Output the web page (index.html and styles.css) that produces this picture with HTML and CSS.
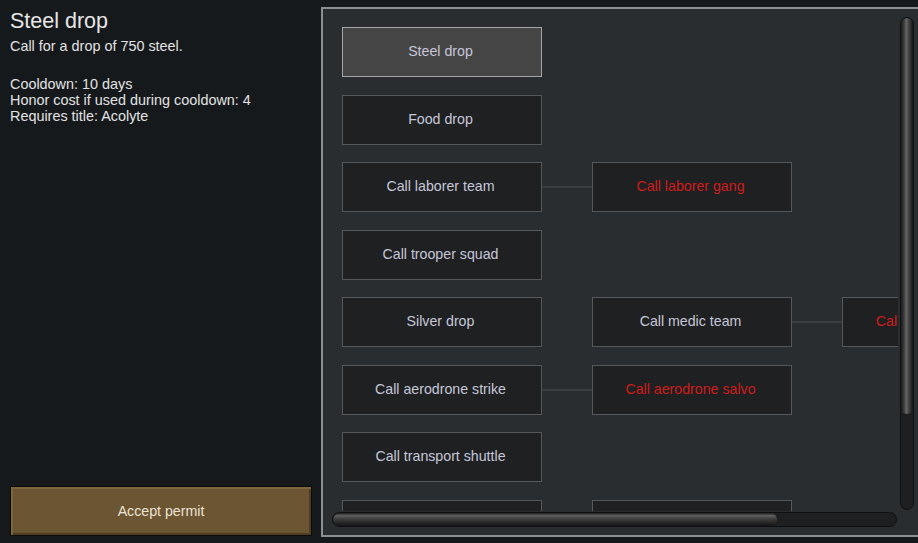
FILE: index.html
```html
<!DOCTYPE html>
<html>
<head>
<meta charset="utf-8">
<link rel="stylesheet" href="styles.css">
</head>
<body>
<div class="app">
  <aside class="info">
    <h1 class="title">Steel drop</h1>
    <p class="desc">Call for a drop of 750 steel.</p>
    <div class="stats">
      <div>Cooldown: 10 days</div>
      <div>Honor cost if used during cooldown: 4</div>
      <div>Requires title: Acolyte</div>
    </div>
    <button class="accept">Accept permit</button>
  </aside>
  <section class="panel">
    <div class="upper">
      <div class="viewport">
        <div class="tree">
          <div class="node selected">Steel drop</div><div></div><div></div><div></div><div></div>
          <div class="node">Food drop</div><div></div><div></div><div></div><div></div>
          <div class="node">Call laborer team</div><div class="link"><span></span></div><div class="node locked">Call laborer gang</div><div></div><div></div>
          <div class="node">Call trooper squad</div><div></div><div></div><div></div><div></div>
          <div class="node">Silver drop</div><div></div><div class="node">Call medic team</div><div class="link"><span></span></div><div class="node locked">Call medic squadron</div>
          <div class="node">Call aerodrone strike</div><div class="link"><span></span></div><div class="node locked">Call aerodrone salvo</div><div></div><div></div>
          <div class="node">Call transport shuttle</div><div></div><div></div><div></div><div></div>
          <div class="node"></div><div></div><div class="node"></div><div></div><div></div>
        </div>
      </div>
      <div class="vscroll"><div class="vthumb"></div></div>
    </div>
    <div class="hscroll"><div class="hthumb"></div></div>
  </section>
</div>
</body>
</html>
```
FILE: styles.css
```css
* { box-sizing: border-box; }
html, body {
  margin: 0;
  padding: 0;
  width: 918px;
  height: 543px;
  overflow: hidden;
  background: #16191c;
  font-family: "Liberation Sans", Arial, sans-serif;
}
.app {
  display: flex;
  height: 543px;
}
.info {
  width: 321px;
  flex: none;
  padding: 8px 9px 7px 10px;
  display: flex;
  flex-direction: column;
  color: #e2e2e2;
}
.title {
  margin: 0;
  font-size: 21.5px;
  font-weight: normal;
  line-height: 26px;
  color: #e6e6e6;
}
.desc {
  margin: 4px 0 0;
  font-size: 14.4px;
  line-height: 16px;
}
.stats {
  margin-top: 22px;
  font-size: 14.4px;
  line-height: 16px;
}
.accept {
  margin-top: auto;
  height: 50px;
  width: 302px;
  background: #6b5532;
  border: 1px solid #0c0b09;
  box-shadow: inset 2px 2px 0 #7e663c, inset -2px -2px 0 #4d3d22;
  color: #ebe3d3;
  font-family: "Liberation Sans", Arial, sans-serif;
  font-size: 14.2px;
  padding: 0;
}
.panel {
  margin-top: 7px;
  width: 600px;
  height: 530px;
  flex: none;
  border: 2px solid #8b8f91;
  background: #2a2d2f;
  display: flex;
  flex-direction: column;
}
.upper {
  display: flex;
  height: 502px;
}
.viewport {
  width: 575px;
  height: 502px;
  overflow: hidden;
  padding: 18px 0 0 19px;
}
.tree {
  display: grid;
  grid-template-columns: 200px 50px 200px 50px 200px;
  grid-auto-rows: 50px;
  row-gap: 17.5px;
  width: 700px;
}
.node {
  background: #1f2021;
  border: 1px solid #56595b;
  color: #c6c7da;
  font-size: 14.2px;
  display: flex;
  align-items: center;
  justify-content: center;
  padding: 0 3px 2px 0;
  white-space: nowrap;
  overflow: hidden;
}
.node.selected {
  background: #454545;
  border-color: #a3a5a7;
}
.node.locked {
  color: #cf1c1c;
}
.link {
  display: flex;
  align-items: center;
}
.link span {
  display: block;
  width: 100%;
  height: 2px;
  background: #3a3d3f;
}
.vscroll {
  margin: 8px 0 0 2px;
  width: 14px;
  height: 493px;
  border-radius: 7px;
  background: #1e1f20;
  border: 1px solid #0f1011;
  overflow: hidden;
}
.vthumb {
  height: 396px;
  border-radius: 7px;
  background: linear-gradient(to right, #1a1a1a, #3c3c3c 25%, #666 45%, #4a4a4a 60%, #2a2a2a 85%, #151515);
}
.hscroll {
  margin: 1px 0 0 9px;
  width: 565px;
  height: 15px;
  border-radius: 8px;
  background: #1e1f20;
  border: 1px solid #0e0f10;
  overflow: hidden;
}
.hthumb {
  width: 444px;
  height: 100%;
  border-radius: 8px;
  background: linear-gradient(to bottom, #1c1c1c, #5e5e5e 20%, #3e3e3e 45%, #2a2a2a 70%, #141414);
}
```
